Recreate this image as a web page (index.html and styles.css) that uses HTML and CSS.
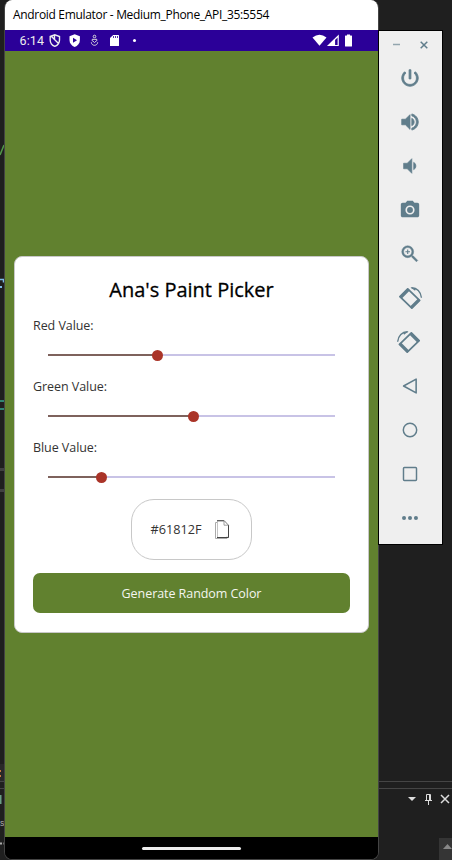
FILE: index.html
```html
<!DOCTYPE html>
<html lang="en">
<head>
<meta charset="utf-8">
<title>Android Emulator</title>
<link rel="stylesheet" href="styles.css">
</head>
<body>
<div class="desktop">
  <svg class="backdrop" width="452" height="860" viewBox="0 0 452 860">
    <path d="M0 764h5v17H0z" fill="#292929"/>
    <path d="M0 781.5h452M0 788.5h452" stroke="#454545"/>
    <path d="M0 469.500h5M0 490.500h5" stroke="#414141" stroke-width="3"/>
    <path d="M0 401h4M0 409h4" stroke="#318673" stroke-width="2"/>
    <path d="M0 155L4 145" stroke="#519849" stroke-width="1.500"/>
    <path d="M0 279.500h3.500v3" stroke="#7dbce8" stroke-width="1.500" fill="none"/>
    <path d="M0 287h2" stroke="#7dbce8" stroke-width="2"/>
    <path d="M0 771h1M0 776h1" stroke="#c8793f" stroke-width="2"/>
    <path d="M0 795h1.500v9H0z" fill="#6a9e86"/>
    <text x="0" y="826" class="code">S</text>
    <path d="M0 843.500h2M3.500 843.500h1.500" stroke="#aaa" stroke-width="2"/>
    <path d="M408 797h8l-4 4z" fill="#ddd"/>
    <path d="M426.500 800v-5.500h4v5.500M429.500 794v6M425 800.500h7M428.500 801v4" stroke="#ddd" fill="none"/>
    <path d="M441 795l8 8M449 795l-8 8" stroke="#ddd" stroke-width="1.500"/>
    <path d="M439 838h13v22h-13z" fill="#353535"/>
    <path d="M443 849l4.500-5 4.500 5z" fill="#888"/>
  </svg>

  <main class="emulator">
    <header class="titlebar"><span>Android Emulator - Medium_Phone_API_35:5554</span></header>
    <div class="status">
      <span class="clock">6:14</span>
      <svg class="status-icons" width="359" height="21" viewBox="0 0 359 21">
        <g fill="none" stroke="#eee" stroke-width="1.400">
          <path d="M35.200 6.500l4.600-1.700 4.700 1.700v3.400c0 3.200-2 5.400-4.700 6.400-2.600-1-4.600-3.200-4.600-6.400zM36 6l8 8M39.500 5.500v4"/>
        </g>
        <path d="M54.500 6.200l5.200-2 5.200 2V10c0 3.500-2.200 5.800-5.200 7-3-1.200-5.200-3.500-5.200-7z" fill="#fff"/>
        <path d="M58 7.700v5l4-2.500z" fill="#2b0098"/>
        <g fill="none" stroke="#ddd" stroke-width="1"><circle cx="79.500" cy="6.500" r="1.300"/><path d="M79.500 12.500l-2.600-2.200q0-1.900 2.600-.8 2.600-1.100 2.600.8zM76.300 12.300c.3 4 6.100 4 6.400 0"/></g>
        <path d="M98.200 5h5.200q.6 0 .6.600v9.800q0 .600-.6.600h-7.800q-.6 0-.6-.6V8z" fill="#fff"/>
        <path d="M98.500 6v2M100.500 6v2M102.500 6v2" stroke="#2b0098" stroke-width=".8"/>
        <circle cx="119.500" cy="10.500" r="1.500" fill="#fff"/>
        <path d="M297.500 7.500q7-5.600 14 0l-7 8.300z" fill="#fff"/>
        <path d="M323.200 6v9.500h-9.700zM319.500 9.500v6" fill="none" stroke="#fff" stroke-width="1.200"/>
        <path d="M312.500 16l7-7v7z" fill="#fff"/>
        <path d="M332 4.500h3v1h1.500q.5 0 .5.500v10q0 .500-.5.500h-6q-.5 0-.5-.5V6q0-.5.500-.5h1.500z" fill="#fff"/>
      </svg>
    </div>
    <section class="app">
      <div class="card">
        <h1>Ana's Paint Picker</h1>
        <label class="name">Red Value:</label>
        <div class="slider"><i class="fill" style="width:109.500px"></i><i class="thumb"></i><i class="rest"></i></div>
        <label class="name">Green Value:</label>
        <div class="slider"><i class="fill" style="width:145.500px"></i><i class="thumb"></i><i class="rest"></i></div>
        <label class="name">Blue Value:</label>
        <div class="slider"><i class="fill" style="width:53px"></i><i class="thumb"></i><i class="rest"></i></div>
        <div class="hex">
          <span>#61812F</span>
          <svg width="16" height="20" viewBox="0 0 16 20" fill="none">
            <path d="M3 2.500H1.500v16h11.500v-2" stroke="#aaa"/>
            <path d="M3.500 1h7.500l3.500 4.500v12h-11z" stroke="#aaa" stroke-width=".7"/>
            <path d="M3 .700h7M14.500 5v12.500H3" stroke="#444"/>
            <path d="M10 .700v4.500h4.500M10 .700l4.500 4.500" stroke="#888" stroke-width=".8"/>
          </svg>
        </div>
        <button class="generate">Generate Random Color</button>
      </div>
    </section>
    <footer class="nav"><i></i></footer>
  </main>

  <aside class="tools">
    <div class="controls">
      <svg width="8" height="10" viewBox="0 0 8 10"><path d="M0 4.500h7" stroke="#93a5ae" stroke-width="1.500"/></svg>
      <svg width="8" height="10" viewBox="0 0 8 10"><path d="M.7 1.700l6.600 6.600M7.300 1.700L.7 8.300" stroke="#607d8b" stroke-width="1.500"/></svg>
    </div>
    <svg viewBox="0 0 24 24"><path d="M13 3h-2v10h2V3zm4.830 2.170l-1.420 1.420C17.990 7.860 19 9.810 19 12c0 3.870-3.130 7-7 7s-7-3.130-7-7c0-2.190 1.010-4.140 2.580-5.420L6.170 5.170C4.230 6.820 3 9.260 3 12c0 4.970 4.030 9 9 9s9-4.030 9-9c0-2.740-1.230-5.180-3.170-6.830z" stroke="#607d8b" stroke-width=".9"/></svg>
    <svg viewBox="0 0 24 24"><path d="M3 9v6h4l5 5V4L7 9H3zm13.500 3c0-1.770-1.020-3.290-2.500-4.030v8.050c1.480-.73 2.500-2.250 2.500-4.020zM14 3.230v2.060c2.890.86 5 3.540 5 6.710s-2.110 5.850-5 6.710v2.060c4.010-.91 7-4.490 7-8.770s-2.990-7.860-7-8.770z" stroke="#607d8b" stroke-width=".9"/></svg>
    <svg viewBox="0 0 24 24"><path d="M5 9v6h4l5 5V4L9 9zm13.500 3A4.500 4.500 0 0 0 16 7.970v8.050A4.500 4.500 0 0 0 18.500 12z" stroke="#607d8b" stroke-width=".7"/></svg>
    <svg viewBox="0 0 24 24"><path fill-rule="evenodd" d="M9 2L7.170 4H4c-1.100 0-2 .9-2 2v12c0 1.100.9 2 2 2h16c1.100 0 2-.9 2-2V6c0-1.100-.9-2-2-2h-3.170L15 2zm3 15a5 5 0 1 1 0-10 5 5 0 0 1 0 10z"/><circle cx="12" cy="12" r="3.200"/></svg>
    <svg viewBox="0 0 24 24"><path d="M15.500 14h-.79l-.28-.27A6.471 6.471 0 0 0 16 9.500 6.500 6.500 0 1 0 9.500 16c1.610 0 3.090-.59 4.230-1.570l.27.280v.79l5 4.990L20.490 19l-4.990-5zm-6 0C7.010 14 5 11.990 5 9.500S7.010 5 9.500 5 14 7.010 14 9.500 11.990 14 9.500 14z" stroke="#607d8b" stroke-width=".5"/><path d="M7 9.500h5M9.500 7v5" stroke="#607d8b" stroke-width="1.200"/></svg>
    <svg viewBox="0 0 24 24"><g id="rot"><path fill="none" stroke="#607d8b" stroke-width="1.900" stroke-linejoin="round" d="M1 10.500L9.500 2l13 12.500L14 23z"/><path d="M.3 10.700L9.500 1.300l2.500 2.300-9.200 9.200zM11.800 21.500l9-9 2.500 2-9.300 9.300z"/><path fill="none" stroke="#607d8b" stroke-width="1.500" d="M13.500 .800c6-.3 10.500 4.500 11 11"/><path d="M12.300 .200l5.200 4 .8-2z"/></g></svg>
    <svg viewBox="0 0 24 24"><use href="#rot" transform="matrix(-1 0 0 1 23 0)"/></svg>
    <svg viewBox="0 0 24 24"><path fill="none" stroke="#607d8b" stroke-width="1.700" stroke-linejoin="round" d="M18.700 4.500v15L5 12z"/></svg>
    <svg viewBox="0 0 24 24"><circle cx="12" cy="12" r="7.300" fill="none" stroke="#607d8b" stroke-width="1.600"/></svg>
    <svg viewBox="0 0 24 24"><rect x="4.900" y="4.900" width="14.200" height="14.200" rx="1" fill="none" stroke="#607d8b" stroke-width="1.600"/></svg>
    <svg viewBox="0 0 24 24"><circle cx="5.500" cy="12" r="2.200"/><circle cx="12" cy="12" r="2.200"/><circle cx="18.500" cy="12" r="2.200"/></svg>
  </aside>
</div>
</body>
</html>
```
FILE: styles.css
```css
* { box-sizing: border-box; }
body { margin: 0; font-family: "Open Sans", "Noto Sans", sans-serif; }
.desktop { position: relative; width: 452px; height: 860px; overflow: hidden; background: #1f1f1f; }
.backdrop { position: absolute; left: 0; top: 0; }
.code { font: 7px "Liberation Mono", monospace; fill: #bbb; }
.emulator {
  position: absolute; left: 4px; top: 0; width: 375px; height: 860px;
  display: flex; flex-direction: column;
  border: 1px solid #444; border-top: 0;
  border-radius: 8px; overflow: hidden; background: #000;
}
.titlebar { height: 30px; background: #fff; padding-left: 8px; color: #000; font-size: 12px; line-height: 30px; white-space: nowrap; letter-spacing: -0.32px; }
.status { height: 21px; background: #2b0098; display: flex; align-items: center; position: relative; }
.clock { font: 12.500px/21px Roboto, sans-serif; color: #eee; padding-left: 14.500px; letter-spacing: .1px; }
.status-icons { position: absolute; left: 10px; top: 0; }
.app { height: 786px; background: #61812f; padding: 205px 9px 0; }
.card { height: 377px; border: 1px solid #c8c8c8; border-radius: 8px; background: #fff; padding: 18px 18px 0; display: flex; flex-direction: column; }
h1 { margin: 0; height: 30px; line-height: 30px; text-align: center; font-size: 20px; font-weight: 400; color: #000; -webkit-text-stroke: .3px #000; }
.name { height: 20px; line-height: 20px; font-size: 12.500px; color: #333; margin-top: 11px; letter-spacing: -.06px; }
.name ~ .name { margin-top: 10.750px; }
.slider { height: 30px; margin: 4px 15px -4px; display: flex; align-items: center; }
.name ~ .name + .slider { margin-top: 4.500px; margin-bottom: -4.500px; }
.fill { height: 2px; background: #7e625c; }
.rest { flex: 1; height: 2px; background: #c8c3e6; }
.thumb { width: 11px; height: 11px; border-radius: 50%; background: #aa3428; margin: 0 -5.500px; z-index: 1; }
.hex { width: 121px; height: 61px; margin: 11px auto 0 98px; border: 1px solid #c8c8c8; border-radius: 23px; padding-left: 18.500px; display: flex; align-items: center; gap: 12px; font-size: 12.700px; color: #333; }
.hex svg { margin-top: 2px; }
.generate { height: 40px; margin-top: 13px; border: 0; border-radius: 7px; background: #61812f; color: #f4f6f0; font: 12.500px "Open Sans", sans-serif; letter-spacing: -.06px; padding: 2px 0 0; flex: none; }
.hex, h1, .name, .slider { flex: none; }
.nav { height: 22px; background: #000; display: flex; justify-content: center; align-items: center; }
.nav i { width: 99px; height: 3px; border-radius: 2px; background: #eee; }
.tools {
  position: absolute; left: 378px; top: 30px; width: 65px; height: 515px;
  border: 1px solid #000; background: #efefef; fill: #607d8b;
  display: flex; flex-direction: column; align-items: center;
}
.tools > svg { width: 22px; height: 22px; margin: 0 2px 22px 0; flex: none; overflow: visible; }
.controls { height: 36px; width: 100%; padding: 9px 14px 0; display: flex; justify-content: space-between; flex: none; }
```
